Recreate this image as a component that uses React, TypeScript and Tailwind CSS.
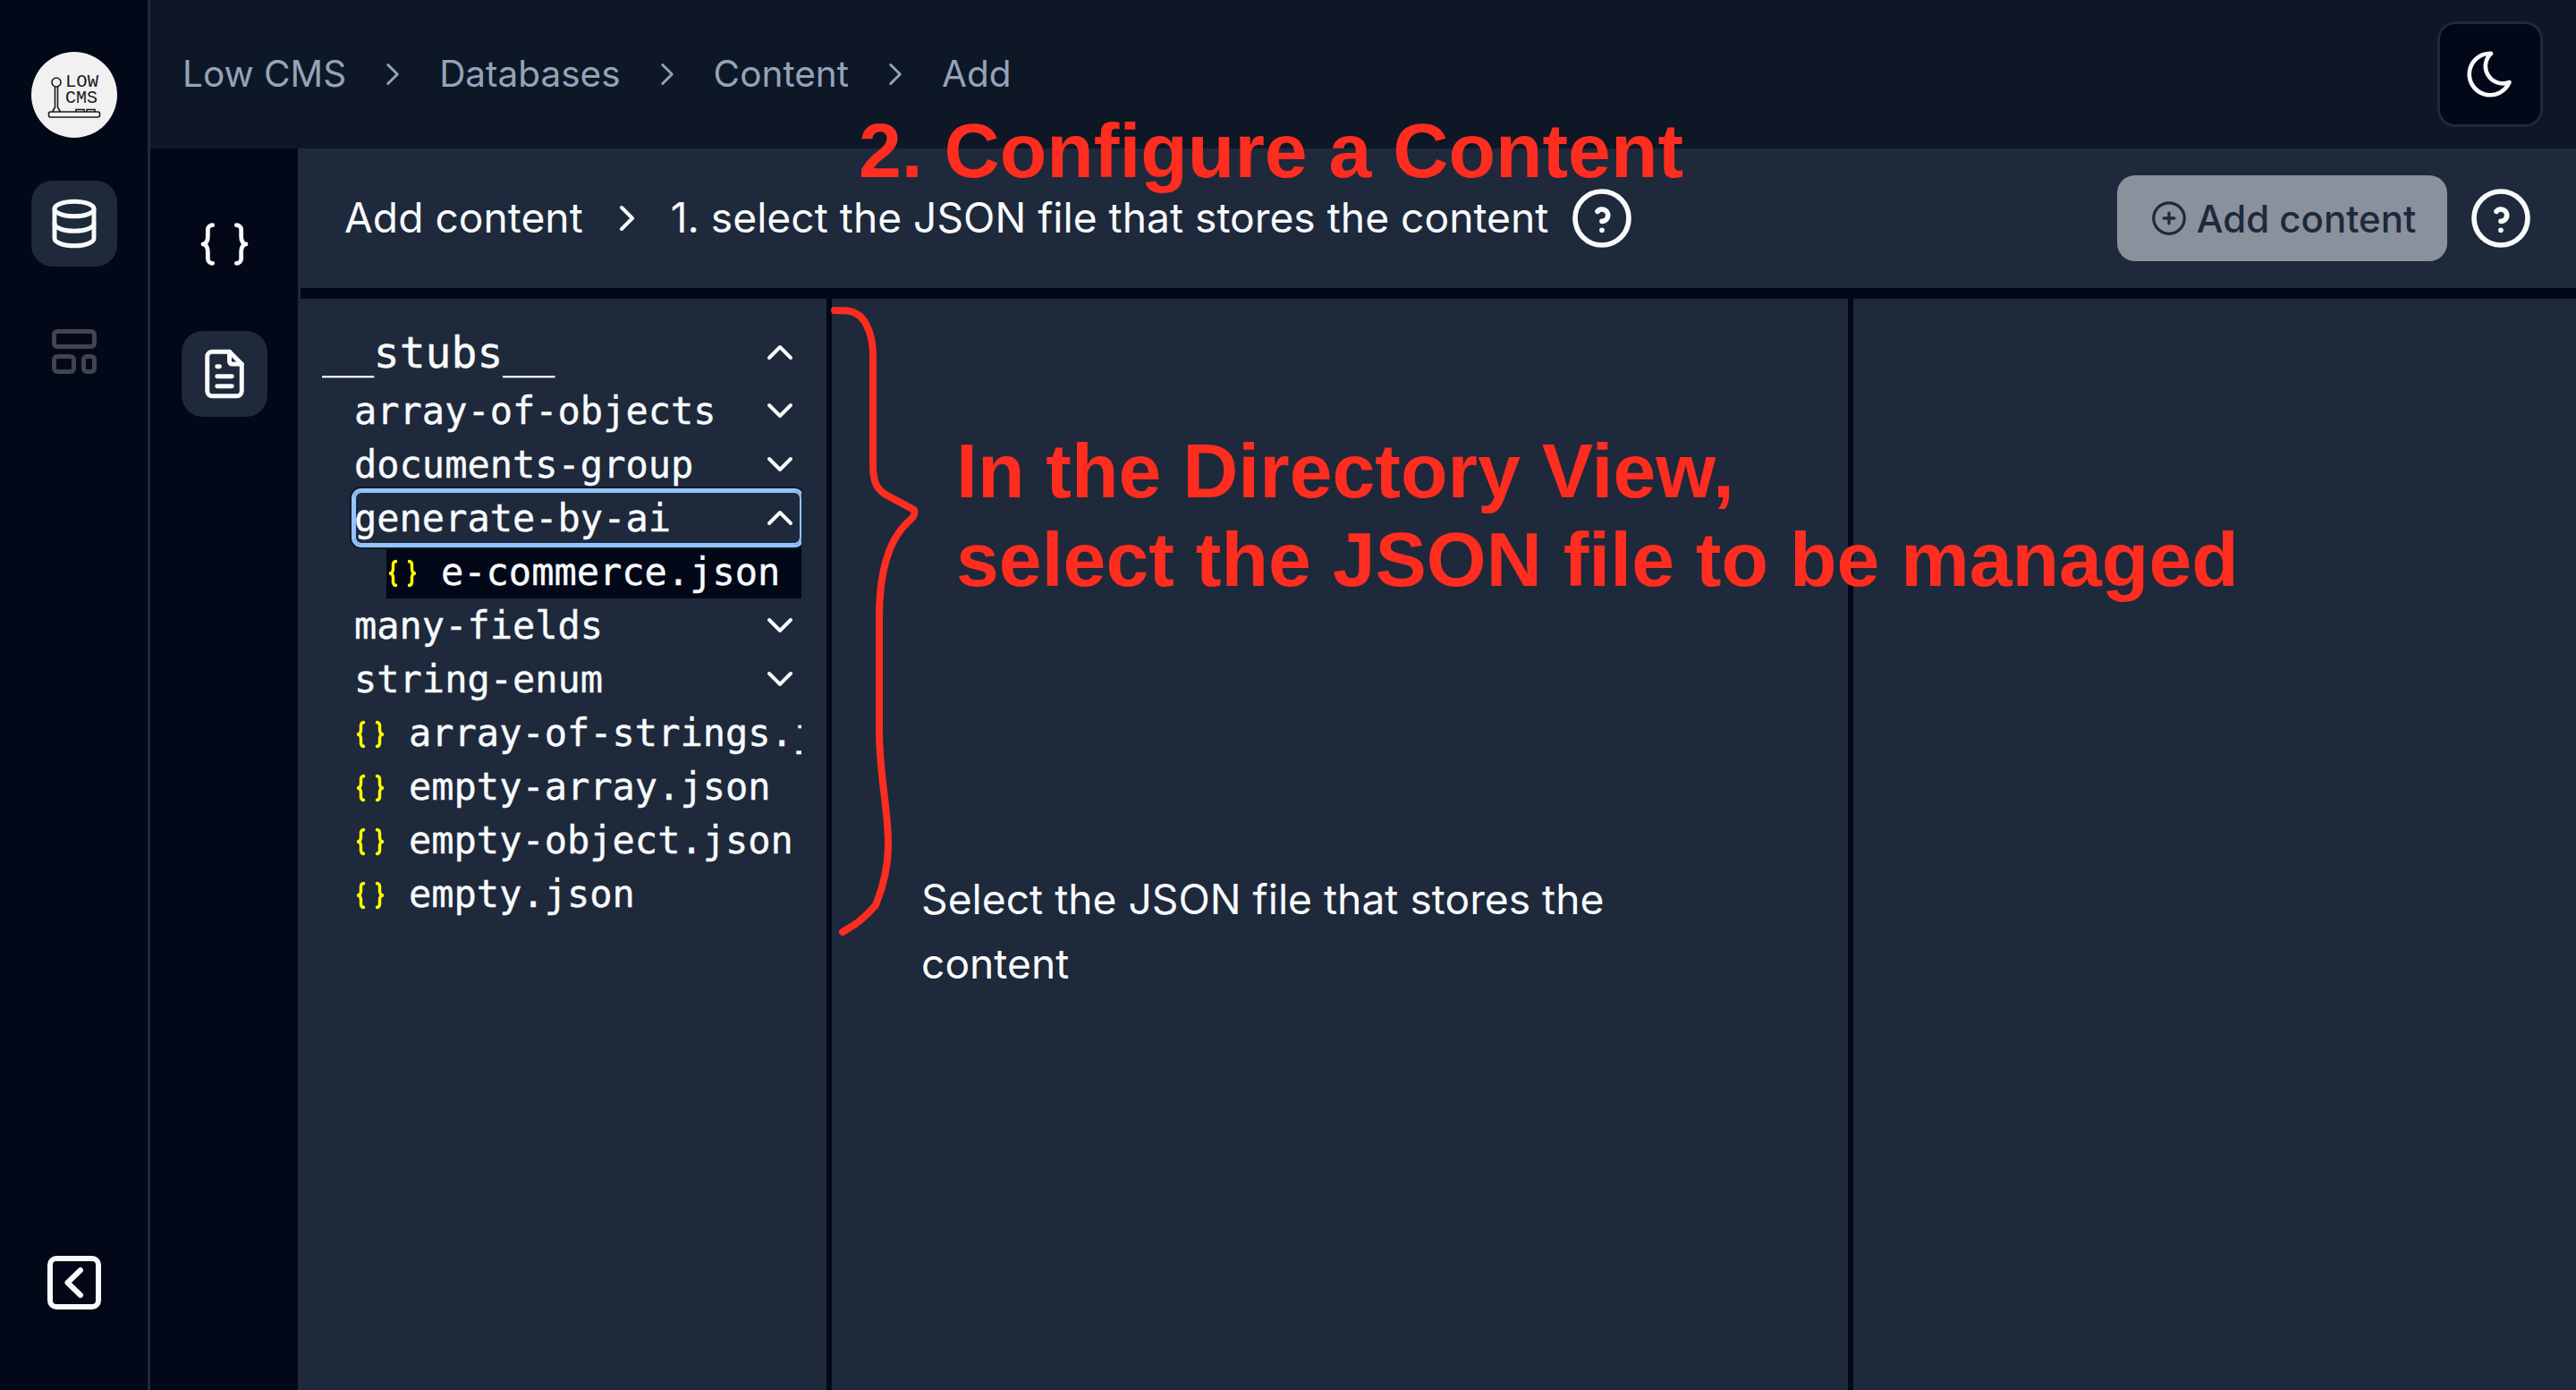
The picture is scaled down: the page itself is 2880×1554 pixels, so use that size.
import React from 'react';
import {
  TbBraces,
  TbChevronDown,
  TbChevronRight,
  TbChevronUp,
  TbCirclePlus,
  TbDatabase,
  TbFileText,
  TbHelpCircle,
  TbMoon,
} from 'react-icons/tb';

const Logo = () => (
  <div className="w-[96px] h-[96px] rounded-full bg-[#f1f1f1] shrink-0">
    <svg width="96" height="96" viewBox="0 0 96 96" fill="none" stroke="#1a1a1a" strokeWidth="1.6">
      <circle cx="28" cy="34" r="5" />
      <path d="M26.5 39v23l-3 5M29.5 39v23l3 5" />
      <rect x="19.5" y="67" width="57" height="6" rx="2" />
      <path d="M50 67v-2.5h9v2.5M62 67v-2.5h9v2.5" />
      <text x="38" y="39" fontFamily="'Liberation Mono', monospace" fontSize="21" fill="#1a1a1a" stroke="none" textLength="37" lengthAdjust="spacingAndGlyphs">LOW</text>
      <text x="38" y="57" fontFamily="'Liberation Mono', monospace" fontSize="20" fill="#1a1a1a" stroke="none" textLength="36" lengthAdjust="spacingAndGlyphs">CMS</text>
    </svg>
  </div>
);

const LayoutIcon = () => (
  <svg width="50" height="50" viewBox="0 0 50 50" fill="none" stroke="#40444f" strokeWidth="5">
    <rect x="2.5" y="2.5" width="45" height="17" rx="3.5" />
    <rect x="2.5" y="30.5" width="22" height="17" rx="3.5" />
    <rect x="35.5" y="30.5" width="12" height="17" rx="3.5" />
  </svg>
);

const BackIcon = () => (
  <svg width="60" height="60" viewBox="0 0 60 60" fill="none" stroke="#f8fafc" strokeWidth="6" strokeLinecap="round" strokeLinejoin="round">
    <rect x="3" y="3" width="54" height="54" rx="7" />
    <path d="M37 16 22.500 30 37 44" />
  </svg>
);

const Folder = ({ name, open, focused }: { name: string; open?: boolean; focused?: boolean }) => (
  <div
    className={`h-[60px] flex items-center justify-between relative ${
      focused ? 'z-10 rounded-[8px] shadow-[inset_0_0_0_2px_#93c5fd,0_0_0_3px_#93c5fd,0_0_0_5px_#111827]' : ''
    }`}
  >
    <span className="whitespace-nowrap">{name}</span>
    {open ? <TbChevronUp size={48} className="shrink-0" /> : <TbChevronDown size={48} className="shrink-0" />}
  </div>
);

const JsonFile = ({ name }: { name: string }) => (
  <div className="h-[60px] flex items-center gap-[25px] whitespace-nowrap overflow-hidden">
    <TbBraces preserveAspectRatio="none" strokeWidth={2.3} className="w-[36px] h-[40px] mt-[4px] text-[#ffff00] shrink-0" />
    <span>{name}</span>
  </div>
);

const Crumb = ({ label, last }: { label: string; last?: boolean }) => (
  <>
    <span>{label}</span>
    {!last && <TbChevronRight size={42} strokeWidth={1.7} className="mx-[31px]" />}
  </>
);

export default function App() {
  return (
    <div className="relative w-[2880px] h-[1554px] overflow-hidden flex bg-[#020817] text-[#f8fafc] font-['Inter',sans-serif]">
      {/* main rail */}
      <aside className="w-[168px] shrink-0 border-r-[3px] border-[#1e293b] flex flex-col items-center pt-[58px] pb-[90px]">
        <Logo />
        <div className="mt-[48px] w-[96px] h-[96px] rounded-[24px] bg-[#1e293b] flex items-center justify-center">
          <TbDatabase size={66} strokeWidth={1.8} />
        </div>
        <div className="mt-[70px]">
          <LayoutIcon />
        </div>
        <div className="mt-auto">
          <BackIcon />
        </div>
      </aside>

      <div className="flex-1 flex flex-col min-w-0">
        {/* breadcrumbs */}
        <header className="h-[166px] shrink-0 bg-[#0d1726] flex items-center justify-between pl-[36px] pr-[37px]">
          <div className="flex items-center text-[40.5px] text-[#94a3b8]">
            <Crumb label="Low CMS" />
            <Crumb label="Databases" />
            <Crumb label="Content" />
            <Crumb label="Add" last />
          </div>
          <button className="w-[118px] h-[118px] rounded-[20px] bg-[#020817] border-[3px] border-[#1e293b] flex items-center justify-center">
            <TbMoon size={62} strokeWidth={1.8} />
          </button>
        </header>

        <div className="flex-1 flex min-h-0">
          {/* sub rail */}
          <div className="w-[165px] shrink-0 flex flex-col items-center pt-[75px]">
            <TbBraces size={64} strokeWidth={1.8} />
            <div className="mt-[65px] w-[96px] h-[96px] rounded-[24px] bg-[#1e293b] flex items-center justify-center">
              <TbFileText size={66} strokeWidth={1.8} />
            </div>
          </div>

          <main className="flex-1 flex flex-col min-w-0 bg-[#1e293b]">
            <div className="h-[156px] shrink-0 flex items-center justify-between pl-[52px] pr-[44px]">
              <div className="flex items-center text-[46.2px]">
                <span>Add content</span>
                <TbChevronRight size={48} className="mx-[25px]" />
                <span>1. select the JSON file that stores the content</span>
                <TbHelpCircle size={80} strokeWidth={1.7} className="ml-[20px]" />
              </div>
              <div className="flex items-center gap-[20px]">
                <button className="w-[369px] h-[96px] rounded-[20px] bg-[#8a919d] text-[#1e293b] flex items-center justify-center gap-[8px] text-[42px] font-medium">
                  <TbCirclePlus size={46} strokeWidth={1.7} />
                  <span>Add content</span>
                </button>
                <TbHelpCircle size={80} strokeWidth={1.7} />
              </div>
            </div>
            <div className="h-[12px] shrink-0 ml-[3px] bg-[#020817]" />

            {/* directory columns */}
            <div className="flex-1 flex min-h-0">
              <div className="w-[597px] shrink-0 border-r-[6px] border-[#020817] pt-[28px] pl-[27px]">
                <div className="w-[536px] overflow-hidden font-['DejaVu_Sans_Mono',monospace] text-[42px] [-webkit-text-stroke:0.4px_#f8fafc] pb-[10px]">
                  <div className="h-[67px] flex items-center justify-between text-[48px] pb-[3px]">
                    <span>__stubs__</span>
                    <TbChevronUp size={48} />
                  </div>
                  <div className="pl-[36px]">
                    <Folder name="array-of-objects" />
                    <Folder name="documents-group" />
                    <Folder name="generate-by-ai" open focused />
                    <div className="ml-[36px] bg-[#020817]">
                      <JsonFile name="e-commerce.json" />
                    </div>
                    <Folder name="many-fields" />
                    <Folder name="string-enum" />
                    <JsonFile name="array-of-strings.json" />
                    <JsonFile name="empty-array.json" />
                    <JsonFile name="empty-object.json" />
                    <JsonFile name="empty.json" />
                  </div>
                </div>
              </div>
              <div className="w-[1142px] shrink-0 border-r-[6px] border-[#020817] pt-[635px] pl-[100px]">
                <p className="w-[800px] text-[46.2px] leading-[72px]">Select the JSON file that stores the content</p>
              </div>
              <div className="flex-1" />
            </div>
          </main>
        </div>
      </div>

      {/* red annotations drawn over the screenshot */}
      <svg className="absolute left-0 top-0 pointer-events-none" width="2880" height="1554" fill="none">
        <path
          d="M933 347C945 347 952 347 958 351C970 358 976 378 976 398L976 520C976 540 981 548 992 554L1022 570C1023 575 1022 577 1018 581C1000 596 983 625 983 690L983 814C983 870 993 900 993 945C993 970 988 990 979 1012C970 1022 960 1032 950 1037L942 1042"
          stroke="#ff2d20"
          strokeWidth="8"
          strokeLinecap="round"
          strokeLinejoin="round"
        />
      </svg>
      <div className="absolute left-[960px] top-[118px] whitespace-nowrap font-['Liberation_Sans',sans-serif] font-bold text-[86px] leading-[100px] text-[#ff2d20]">
        2. Configure a Content
      </div>
      <div className="absolute left-[1069px] top-[477px] whitespace-nowrap font-['Liberation_Sans',sans-serif] font-bold text-[86px] leading-[99px] text-[#ff2d20]">
        In the Directory View,
        <br />
        select the JSON file to be managed
      </div>
    </div>
  );
}
